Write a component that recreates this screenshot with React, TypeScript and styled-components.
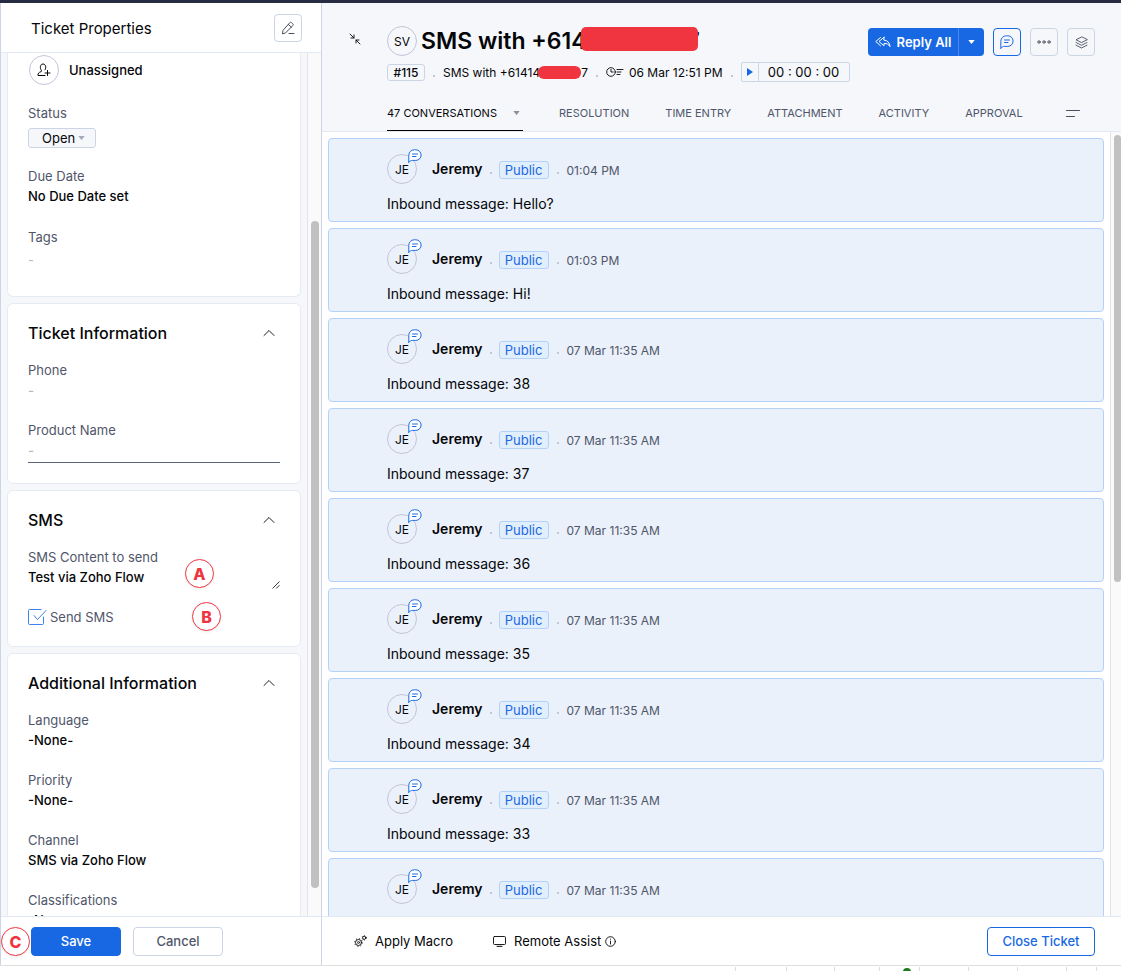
import React from "react";
import styled, { createGlobalStyle, css } from "styled-components";

const color = {
  ink: "#050608",
  label: "#50566a",
  faint: "#b4b8cc",
  blue: "#1968e3",
  line: "#ccd5e5",
  soft: "#e3eaf4",
  panel: "#f5f7fb",
  red: "#f03541",
};

const GlobalStyle = createGlobalStyle`
  *, *::before, *::after { box-sizing: border-box; }
  body { margin: 0; background: #fff; overflow: hidden; }
  body, button, input, textarea, select {
    font-family: Inter, "Liberation Sans", sans-serif;
    font-size: 13px;
    color: ${color.ink};
  }
  button { cursor: pointer; padding: 0; }
  h1, h2, ul, p { margin: 0; padding: 0; }
  svg { display: block; flex: none; }
`;

const Page = styled.div`
  display: grid;
  grid-template-rows: 3px minmax(0, 1fr) 6px;
  height: 100vh;
`;

const TopStrip = styled.div`
  background: #282c42;
`;

const Workspace = styled.div`
  display: grid;
  grid-template-columns: 322px minmax(0, 1fr);
  min-height: 0;
`;

/* ---------- sidebar ---------- */

const Sidebar = styled.aside`
  display: flex;
  flex-direction: column;
  min-height: 0;
  border-left: 1px solid ${color.line};
  border-right: 1px solid ${color.line};
  background: ${color.panel};
`;

const SidebarHeader = styled.header`
  display: flex;
  align-items: center;
  justify-content: space-between;
  flex: none;
  height: 50px;
  padding: 0 19px 0 30px;
  background: #fff;
  border-bottom: 1px solid ${color.soft};
`;

const SidebarTitle = styled.h1`
  padding-top: 2px;
  font-size: 15px;
  font-weight: 400;
`;

const IconButton = styled.button<{ $active?: boolean }>`
  display: grid;
  place-items: center;
  width: 28px;
  height: 28px;
  border: 1px solid ${(p) => (p.$active ? color.blue : color.line)};
  border-radius: 4px;
  background: transparent;
  color: ${(p) => (p.$active ? color.blue : "#4a4f60")};
`;

const ScrollArea = styled.div`
  display: flex;
  flex: 1;
  min-height: 0;
  overflow: hidden;
`;

const ScrollTrack = styled.div<{ $wide?: boolean }>`
  display: flex;
  flex-direction: column;
  flex: none;
  width: ${(p) => (p.$wide ? 14 : 11)}px;
  padding: 0 ${(p) => (p.$wide ? 2 : 0)}px 0 3px;
  border-left: 1px solid #e4e4e6;
  background: #fafafa;
`;

const ScrollGap = styled.div<{ $share: number }>`
  flex: ${(p) => p.$share} 0 0;
`;

const ScrollThumb = styled(ScrollGap)`
  border-radius: 4px;
  background: #c1c1c1;
`;

const Cards = styled.div`
  display: flex;
  flex: 1;
  flex-direction: column;
  gap: 6px;
  min-width: 0;
  padding: 0 6px;
`;

const Card = styled.section<{ $continued?: boolean }>`
  flex: none;
  padding: 19px 20px;
  border: 1px solid #e6ebf3;
  border-radius: 6px;
  background: #fff;
  ${(p) =>
    p.$continued &&
    css`
      padding: 2px 20px 26px;
      border-top: 0;
      border-radius: 0 0 6px 6px;
    `}
`;

const CardHeader = styled.header`
  display: flex;
  align-items: center;
  justify-content: space-between;
  height: 20px;
  margin-bottom: 17px;
  padding-right: 5px;
`;

const CardTitle = styled.h2`
  font-size: 16px;
  font-weight: 500;
  line-height: 20px;
`;

const PlainButton = styled.button`
  display: flex;
  align-items: center;
  border: 0;
  background: none;
`;

const Field = styled.div`
  display: flex;
  flex-direction: column;
  & + & { margin-top: 20px; }
`;

const FieldLabel = styled.label`
  line-height: 20px;
  color: ${color.label};
`;

const valueText = css`
  display: block;
  width: 100%;
  height: 20px;
  padding: 0;
  border: 0;
  outline: 0;
  background: transparent;
  font-weight: 500;
  line-height: 20px;
`;

const FieldSelect = styled.select`
  ${valueText}
  appearance: none;
`;

const FieldInput = styled.input<{ $underlined?: boolean }>`
  ${valueText}
  color: ${color.faint};
  ${(p) =>
    p.$underlined &&
    css`
      height: 23px;
      margin-bottom: 1px;
      padding-bottom: 2px;
      border-bottom: 1px solid #5b6579;
    `}
`;

const TextAreaRow = styled.div`
  display: flex;
  align-items: flex-end;
  height: 22px;
`;

const FieldTextArea = styled.textarea`
  ${valueText}
  height: 22px;
  resize: none;
  overflow: hidden;
`;

const Assignee = styled.div`
  display: flex;
  align-items: center;
  gap: 10px;
  margin: 0 0 18px 1px;
  font-weight: 500;
`;

const Avatar = styled.span`
  display: grid;
  place-items: center;
  flex: none;
  width: 30px;
  height: 30px;
  border: 1px solid #c3c4d9;
  border-radius: 50%;
  font-size: 12px;
`;

const StatusBox = styled.div`
  display: flex;
  align-items: center;
  width: 68px;
  height: 20px;
  margin: 5px 0 18px;
  padding-left: 13px;
  border: 1px solid ${color.line};
  border-radius: 3px;
  background: ${color.panel};
  color: #a6aab8;
`;

const StatusSelect = styled.select`
  width: 36px;
  padding: 0;
  border: 0;
  background: none;
  appearance: none;
`;

const DueDate = styled.p`
  font-weight: 500;
  line-height: 20px;
  margin-bottom: 21px;
`;

const EmptyTags = styled.p`
  margin-top: 3px;
  line-height: 20px;
  color: ${color.faint};
`;

const CheckLabel = styled.label`
  display: flex;
  align-items: center;
  gap: 4px;
  height: 20px;
  margin-top: 18px;
  color: ${color.label};
`;

const CheckBox = styled.span`
  position: relative;
  width: 18px;
  height: 16px;
  input {
    width: 16px;
    height: 16px;
    margin: 0;
    opacity: 0;
  }
  svg { position: absolute; top: 0; left: 0; color: #3b82ee; }
`;

const MarkerHost = styled.div`
  position: relative;
`;

const Marker = styled.span<{ $left: number; $top: number }>`
  position: absolute;
  left: ${(p) => p.$left}px;
  top: ${(p) => p.$top}px;
  display: grid;
  place-items: center;
  width: 29px;
  height: 29px;
  border: 1px solid ${color.red};
  border-radius: 50%;
  background: #fff;
  box-shadow: 0 1px 3px rgba(0, 0, 0, 0.08);
  font-size: 16px;
  font-weight: 800;
  color: ${color.red};
`;

const SidebarFooter = styled.footer`
  position: relative;
  display: flex;
  flex: none;
  align-items: center;
  gap: 12px;
  height: 49px;
  padding-left: 30px;
  border-top: 1px solid ${color.soft};
  background: #fff;
`;

const Button = styled.button<{ $kind: "primary" | "plain" | "outline" }>`
  width: ${(p) => (p.$kind === "outline" ? 108 : 90)}px;
  height: 29px;
  border: 1px solid ${(p) => (p.$kind === "plain" ? color.line : color.blue)};
  border-radius: 4px;
  background: ${(p) => (p.$kind === "primary" ? color.blue : "#fff")};
  color: ${(p) => (p.$kind === "primary" ? "#fff" : p.$kind === "plain" ? color.label : color.blue)};
  font-weight: 500;
`;

/* ---------- ticket ---------- */

const Ticket = styled.main`
  display: flex;
  flex-direction: column;
  min-width: 0;
  min-height: 0;
`;

const TicketHeader = styled.header`
  display: grid;
  grid-template-columns: 38px minmax(0, 1fr);
  flex: none;
  height: 129px;
  padding: 23px 26px 0 27px;
  border-bottom: 1px solid ${color.soft};
  background: ${color.panel};
`;

const CollapseButton = styled(PlainButton)`
  align-self: start;
  margin-top: 7px;
`;

const HeaderBody = styled.div`
  display: flex;
  flex-direction: column;
  min-width: 0;
`;

const TitleRow = styled.div`
  display: flex;
  align-items: center;
  gap: 4px;
  height: 30px;
`;

const TicketTitle = styled.h1`
  display: flex;
  align-items: center;
  flex: 1;
  font-size: 23px;
  font-weight: 600;
  line-height: 28px;
  white-space: nowrap;
`;

const Redaction = styled.span<{ $large?: boolean }>`
  z-index: 1;
  flex: none;
  width: ${(p) => (p.$large ? 117 : 43)}px;
  height: ${(p) => (p.$large ? 24 : 13)}px;
  margin: ${(p) => (p.$large ? "0 -11px 4px -6px" : "0 0 0 -2px")};
  border-radius: ${(p) => (p.$large ? 5 : 6)}px;
  background: ${color.red};
`;

const Actions = styled.div`
  display: flex;
  gap: 9px;
  margin-top: 2px;
`;

const ReplySplit = styled.div`
  display: flex;
  height: 28px;
  border-radius: 4px;
  overflow: hidden;
`;

const ReplyButton = styled.button`
  display: flex;
  align-items: center;
  justify-content: center;
  gap: 6px;
  width: 90px;
  border: 0;
  background: ${color.blue};
  color: #fff;
  font-weight: 600;
  white-space: nowrap;
`;

const ReplyMore = styled(ReplyButton)`
  width: 26px;
  border-left: 1px solid #4a8af0;
`;

const MetaRow = styled.div`
  display: flex;
  align-items: center;
  height: 20px;
  margin-top: 6px;
  white-space: nowrap;
`;

const TicketId = styled.span`
  width: 38px;
  height: 17px;
  border: 1px solid ${color.line};
  border-radius: 3px;
  font-size: 12px;
  font-weight: 500;
  line-height: 15px;
  text-align: center;
`;

const Dot = styled.span<{ $tight?: boolean }>`
  flex: none;
  width: 2px;
  height: 2px;
  margin: 8px ${(p) => (p.$tight ? 7 : 8)}px 0;
  background: #c3c5d6;
`;

const MetaText = styled.span`
  display: flex;
  align-items: center;
  gap: 5px;
  font-size: 12px;
`;

const Timer = styled.div`
  display: flex;
  align-items: center;
  width: 109px;
  height: 20px;
  border: 1px solid ${color.line};
  border-radius: 2px;
`;

const TimerButton = styled(PlainButton)`
  justify-content: center;
  width: 17px;
  height: 18px;
  border-right: 1px solid ${color.line};
  color: ${color.blue};
`;

const TimerText = styled.span`
  flex: 1;
  text-align: center;
`;

const Tabs = styled.nav`
  display: flex;
  align-items: center;
  gap: 36px;
  height: 36px;
  margin-top: 13px;
  padding-right: 15px;
`;

const Tab = styled.button<{ $active?: boolean }>`
  display: flex;
  align-items: center;
  gap: 16px;
  height: 36px;
  border: 0;
  border-bottom: 1px solid ${(p) => (p.$active ? "#000" : "transparent")};
  background: none;
  color: ${(p) => (p.$active ? color.ink : color.label)};
  font-size: 11px;
  white-space: nowrap;
  svg { margin-right: 3px; color: #8a8f9c; }
`;

const TabMenu = styled(PlainButton)`
  margin-left: auto;
`;

const Conversations = styled.ul`
  display: flex;
  flex: 1;
  flex-direction: column;
  gap: 6px;
  min-width: 0;
  padding: 6px;
  list-style: none;
`;

const Message = styled.li`
  flex: none;
  height: 84px;
  padding: 15px 58px 0;
  border: 1px solid #b4d2f7;
  border-radius: 4px;
  background: #eaf1fb;
`;

const MessageHead = styled.div`
  display: flex;
  align-items: center;
  height: 30px;
`;

const BadgedAvatar = styled(Avatar)`
  position: relative;
  margin-right: 15px;
  svg { position: absolute; top: -6px; left: 20px; color: ${color.blue}; }
`;

const Author = styled.strong`
  padding-bottom: 2px;
  font-size: 14px;
  font-weight: 600;
`;

const Visibility = styled.span`
  width: 50px;
  height: 18px;
  margin-top: 2px;
  border: 1px solid #b4d2f7;
  border-radius: 3px;
  background: #e1eefc;
  color: ${color.blue};
  line-height: 16px;
  text-align: center;
`;

const Time = styled.time`
  padding-top: 2px;
  color: ${color.label};
  font-size: 12px;
`;

const MessageText = styled.p`
  margin-top: 10px;
  font-size: 14px;
  line-height: 20px;
`;

const TicketFooter = styled.footer`
  display: flex;
  align-items: center;
  flex: none;
  gap: 40px;
  height: 49px;
  padding: 0 26px 0 32px;
  border-top: 1px solid ${color.soft};
  background: #fff;
  ${Button} { margin-left: auto; }
`;

const FooterAction = styled(PlainButton)`
  gap: 8px;
`;

const WithInfo = styled.span`
  display: flex;
  align-items: center;
  gap: 4px;
`;

/* ---------- edge of the sheet under the window ---------- */

const SheetEdge = styled.div`
  display: flex;
  justify-content: flex-end;
  border-top: 1px solid #dedede;
  background: #fff;
  overflow: hidden;
`;

const SheetCell = styled.span<{ $width: number }>`
  display: flex;
  justify-content: center;
  width: ${(p) => p.$width}px;
  margin-top: 1px;
  border-left: 1px solid #dcdcdc;
`;

const SheetDot = styled.span`
  width: 8px;
  height: 8px;
  margin: 1px 0 0 14px;
  border-radius: 50%;
  background: #1c7a1c;
`;

/* ---------- icons ---------- */

const stroke = { fill: "none", stroke: "currentColor", strokeLinecap: "round", strokeLinejoin: "round" } as const;

const Caret = () => (
  <svg width="7" height="4" viewBox="0 0 7 4" aria-hidden="true">
    <path d="M.3 0h6.4L3.5 4z" fill="currentColor" />
  </svg>
);

const ChevronUp = () => (
  <svg width="12" height="8" viewBox="0 0 12 8" {...stroke} strokeWidth=".9" aria-hidden="true">
    <path d="M1 6.5 6 1.5l5 5" />
  </svg>
);

const PencilIcon = () => (
  <svg width="14" height="14" viewBox="0 0 14 14" {...stroke} aria-hidden="true">
    <path d="M1.5 12.5 2 9.3l6.800-7.600c.6-.6 1.200-.6 1.800 0l1.100 1c.6.6.6 1.200.1 1.800l-7 7.200zM7.300 3.400l3.100 2.800M8 12.500h5" />
  </svg>
);

const AddUserIcon = () => (
  <svg width="14" height="14" viewBox="0 0 14 14" {...stroke} aria-hidden="true">
    <path d="M8 12.500H1c0-2.300.6-3 3.200-3.900.5-.3.500-1 .1-1.400C2.600 5 3.200 1 6 1s3.500 3.800 2 5.800M10.500 7.500v5M8 10h5" />
  </svg>
);

const ResizeIcon = () => (
  <svg width="8" height="8" viewBox="0 0 8 8" {...stroke} strokeWidth=".8" aria-hidden="true">
    <path d="M.8 7.200 7.200.8M4.500 7.200l2.700-2.700" />
  </svg>
);

const CheckIcon = () => (
  <svg width="19" height="16" viewBox="0 0 19 16" {...stroke} aria-hidden="true">
    <path d="M13 .5H1.500a1 1 0 0 0-1 1v13a1 1 0 0 0 1 1h13a1 1 0 0 0 1-1V8M6 6.500l3.500 4L18 1.500" />
  </svg>
);

const CollapseIcon = () => (
  <svg width="12" height="12" viewBox="0 0 12 12" {...stroke} strokeWidth=".9" aria-hidden="true">
    <path d="M1 1l4 4M5 2v3H2M11 11 7 7M7 10V7h3" />
  </svg>
);

const ReplyAllIcon = () => (
  <svg width="16" height="12" viewBox="0 0 16 12" {...stroke} aria-hidden="true">
    <path d="M5.500 1.500.8 5.500l4.700 4.300M9 1.200 4 5.500 9 9.800V7.400c3 0 4.600.8 6 3.200-.2-3.600-2.300-6.300-6-6.600z" />
  </svg>
);

const CommentIcon = ({ size, fill = "none" }: { size: number; fill?: string }) => (
  <svg width={size} height={size} viewBox="0 0 14 14" {...stroke} fill={fill} aria-hidden="true">
    <path d="M.8 13.200V6.300A5.500 5.500 0 0 1 6.300.8h1.500a5.300 5.300 0 0 1 0 10.600H4.300c-1.300 0-2.200.6-3.500 1.800zM4.500 5h5M4.500 7.500H8" />
  </svg>
);

const MoreIcon = () => (
  <svg width="14" height="4" viewBox="0 0 14 4" {...stroke} aria-hidden="true">
    <circle cx="2" cy="2" r="1.200" />
    <circle cx="7" cy="2" r="1.200" />
    <circle cx="12" cy="2" r="1.200" />
  </svg>
);

const LayersIcon = () => (
  <svg width="13" height="13" viewBox="0 0 13 13" {...stroke} strokeWidth=".9" aria-hidden="true">
    <path d="M6.500 1 1 3.800l5.500 2.800L12 3.800zM1 6.500l5.500 2.800L12 6.500M1 9.200 6.500 12 12 9.200" />
  </svg>
);

const ClockListIcon = () => (
  <svg width="18" height="10" viewBox="0 0 18 10" {...stroke} strokeWidth=".9" aria-hidden="true">
    <circle cx="5" cy="5" r="4.300" />
    <path d="M5 2.500V5h2.200M11 2.500h6M11 5h4M11 7.500h3" />
  </svg>
);

const PlayIcon = () => (
  <svg width="6" height="8" viewBox="0 0 6 8" aria-hidden="true">
    <path d="M0 0l6 4-6 4z" fill="currentColor" />
  </svg>
);

const SortIcon = () => (
  <svg width="14" height="8" viewBox="0 0 14 8" {...stroke} aria-hidden="true">
    <path d="M.5 1.500h13M.5 7.500h8" stroke="#4a4f60" />
  </svg>
);

const MacroIcon = () => (
  <svg width="13" height="12" viewBox="0 0 13 12" {...stroke} aria-hidden="true">
    <circle cx="4.500" cy="7.500" r="3" strokeWidth=".9" />
    <circle cx="4.500" cy="7.500" r="1" strokeWidth=".8" />
    <circle cx="4.500" cy="7.500" r="3.900" strokeDasharray="1 2.060" strokeLinecap="butt" />
    <circle cx="10.200" cy="2.800" r="1.600" strokeWidth=".9" />
    <circle cx="10.200" cy="2.800" r="2.200" strokeWidth=".8" strokeDasharray=".8 1.500" strokeLinecap="butt" />
  </svg>
);

const MonitorIcon = () => (
  <svg width="13" height="12" viewBox="0 0 13 12" {...stroke} aria-hidden="true">
    <rect x=".5" y="1.500" width="12" height="8" rx="1" strokeWidth=".9" />
    <path d="M4 11.300h5" />
  </svg>
);

const InfoIcon = () => (
  <svg width="11" height="11" viewBox="0 0 11 11" {...stroke} strokeWidth=".9" aria-hidden="true">
    <circle cx="5.500" cy="5.500" r="4.800" />
    <path d="M5.500 5v3M5.500 3v.2" />
  </svg>
);

/* ---------- data ---------- */

const tabs = ["RESOLUTION", "TIME ENTRY", "ATTACHMENT", "ACTIVITY", "APPROVAL"];

const messages: { time: string; text?: string }[] = [
  { time: "01:04 PM", text: "Hello?" },
  { time: "01:03 PM", text: "Hi!" },
  ...[38, 37, 36, 35, 34, 33].map((n) => ({ time: "07 Mar 11:35 AM", text: String(n) })),
  { time: "07 Mar 11:35 AM" },
];

const additional = [
  ["Language", "-None-"],
  ["Priority", "-None-"],
  ["Channel", "SMS via Zoho Flow"],
  ["Classifications", "-None-"],
];

const sheetCells = [51, 48, 45, 40, 49, 49, 49, 30, 25];

function CardHead({ title }: { title: string }) {
  return (
    <CardHeader>
      <CardTitle>{title}</CardTitle>
      <PlainButton aria-label={`Collapse ${title}`}>
        <ChevronUp />
      </PlainButton>
    </CardHeader>
  );
}

function Properties() {
  return (
    <Sidebar>
      <SidebarHeader>
        <SidebarTitle>Ticket Properties</SidebarTitle>
        <IconButton aria-label="Edit properties">
          <PencilIcon />
        </IconButton>
      </SidebarHeader>
      <ScrollArea>
        <Cards>
          <Card $continued>
            <Assignee>
              <Avatar>
                <AddUserIcon />
              </Avatar>
              Unassigned
            </Assignee>
            <Field>
              <FieldLabel htmlFor="status">Status</FieldLabel>
              <StatusBox>
                <StatusSelect id="status">
                  <option>Open</option>
                </StatusSelect>
                <Caret />
              </StatusBox>
            </Field>
            <FieldLabel as="p">Due Date</FieldLabel>
            <DueDate>No Due Date set</DueDate>
            <FieldLabel as="p">Tags</FieldLabel>
            <EmptyTags>-</EmptyTags>
          </Card>

          <Card>
            <CardHead title="Ticket Information" />
            <Field>
              <FieldLabel htmlFor="phone">Phone</FieldLabel>
              <FieldInput id="phone" defaultValue="-" />
            </Field>
            <Field>
              <FieldLabel htmlFor="product">Product Name</FieldLabel>
              <FieldInput id="product" defaultValue="-" $underlined />
            </Field>
          </Card>

          <Card>
            <CardHead title="SMS" />
            <MarkerHost>
              <Field>
                <FieldLabel htmlFor="sms">SMS Content to send</FieldLabel>
                <TextAreaRow>
                  <FieldTextArea id="sms" rows={1} defaultValue="Test via Zoho Flow" />
                  <ResizeIcon />
                </TextAreaRow>
              </Field>
              <CheckLabel>
                <CheckBox>
                  <input type="checkbox" defaultChecked />
                  <CheckIcon />
                </CheckBox>
                Send SMS
              </CheckLabel>
              <Marker $left={157} $top={12}>A</Marker>
              <Marker $left={164} $top={55}>B</Marker>
            </MarkerHost>
          </Card>

          <Card>
            <CardHead title="Additional Information" />
            {additional.map(([name, value]) => (
              <Field key={name}>
                <FieldLabel htmlFor={name}>{name}</FieldLabel>
                <FieldSelect id={name}>
                  <option>{value}</option>
                </FieldSelect>
              </Field>
            ))}
          </Card>
        </Cards>
        <ScrollTrack $wide>
          <ScrollGap $share={168} />
          <ScrollThumb $share={667} />
          <ScrollGap $share={28} />
        </ScrollTrack>
      </ScrollArea>
      <SidebarFooter>
        <Marker $left={0} $top={10}>C</Marker>
        <Button $kind="primary">Save</Button>
        <Button $kind="plain">Cancel</Button>
      </SidebarFooter>
    </Sidebar>
  );
}

export default function App() {
  return (
    <Page>
      <GlobalStyle />
      <TopStrip />
      <Workspace>
        <Properties />
        <Ticket>
          <TicketHeader>
            <CollapseButton aria-label="Collapse ticket">
              <CollapseIcon />
            </CollapseButton>
            <HeaderBody>
              <TitleRow>
                <Avatar>SV</Avatar>
                <TicketTitle>
                  SMS with +614
                  <Redaction $large />7
                </TicketTitle>
                <Actions>
                  <ReplySplit>
                    <ReplyButton>
                      <ReplyAllIcon />
                      Reply All
                    </ReplyButton>
                    <ReplyMore aria-label="More reply options">
                      <Caret />
                    </ReplyMore>
                  </ReplySplit>
                  <IconButton $active aria-label="Comment">
                    <CommentIcon size={14} />
                  </IconButton>
                  <IconButton aria-label="More actions">
                    <MoreIcon />
                  </IconButton>
                  <IconButton aria-label="Layers">
                    <LayersIcon />
                  </IconButton>
                </Actions>
              </TitleRow>
              <MetaRow>
                <TicketId>#115</TicketId>
                <Dot />
                <MetaText>SMS with +61414</MetaText>
                <Redaction />
                <MetaText>7</MetaText>
                <Dot />
                <MetaText>
                  <ClockListIcon />
                  06 Mar 12:51 PM
                </MetaText>
                <Dot />
                <Timer>
                  <TimerButton aria-label="Start timer">
                    <PlayIcon />
                  </TimerButton>
                  <TimerText>00 : 00 : 00</TimerText>
                </Timer>
              </MetaRow>
              <Tabs>
                <Tab $active>
                  47 CONVERSATIONS
                  <Caret />
                </Tab>
                {tabs.map((tab) => (
                  <Tab key={tab}>{tab}</Tab>
                ))}
                <TabMenu aria-label="Tab options">
                  <SortIcon />
                </TabMenu>
              </Tabs>
            </HeaderBody>
          </TicketHeader>
          <ScrollArea>
            <Conversations>
              {messages.map((message, index) => (
                <Message key={index}>
                  <MessageHead>
                    <BadgedAvatar>
                      JE
                      <CommentIcon size={14} fill="#fff" />
                    </BadgedAvatar>
                    <Author>Jeremy</Author>
                    <Dot $tight />
                    <Visibility>Public</Visibility>
                    <Dot />
                    <Time>{message.time}</Time>
                  </MessageHead>
                  {message.text && <MessageText>Inbound message: {message.text}</MessageText>}
                </Message>
              ))}
            </Conversations>
            <ScrollTrack>
              <ScrollGap $share={3} />
              <ScrollThumb $share={447} />
              <ScrollGap $share={334} />
            </ScrollTrack>
          </ScrollArea>
          <TicketFooter>
            <FooterAction>
              <MacroIcon />
              Apply Macro
            </FooterAction>
            <FooterAction>
              <MonitorIcon />
              <WithInfo>
                Remote Assist
                <InfoIcon />
              </WithInfo>
            </FooterAction>
            <Button $kind="outline">Close Ticket</Button>
          </TicketFooter>
        </Ticket>
      </Workspace>
      <SheetEdge>
        {sheetCells.map((width, index) => (
          <SheetCell key={index} $width={width}>
            {index === 3 && <SheetDot />}
          </SheetCell>
        ))}
      </SheetEdge>
    </Page>
  );
}
